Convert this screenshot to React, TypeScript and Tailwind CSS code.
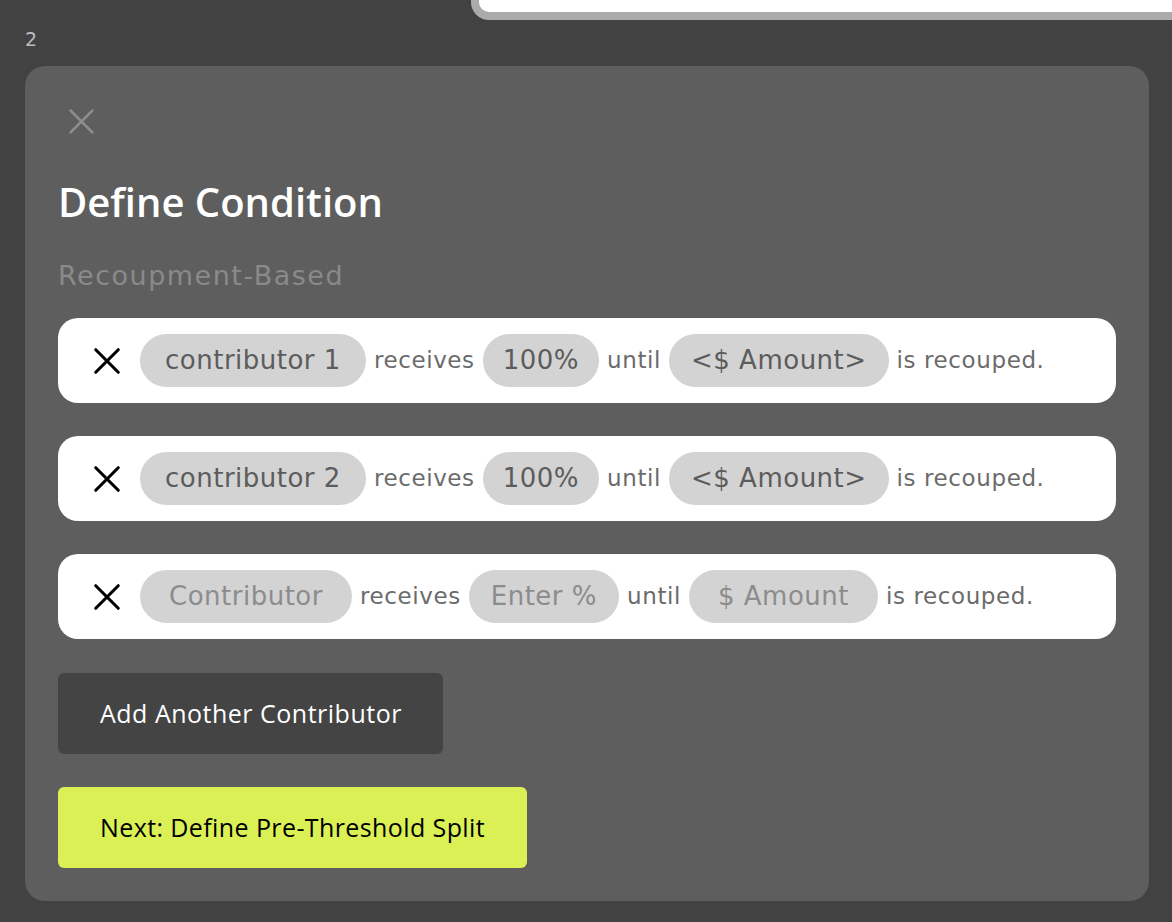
import React from 'react';

const body = { fontFamily: '"DejaVu Sans", "Liberation Sans", sans-serif' };
const open = { fontFamily: '"Open Sans", "Liberation Sans", sans-serif' };

type Part = { label: string; pad: string };

function CloseIcon({ className, width = 2.2 }: { className?: string; width?: number }) {
  return (
    <svg viewBox="0 0 24 24" className={className} fill="none" stroke="currentColor" strokeWidth={width} strokeLinecap="round">
      <path d="M3 3L21 21M21 3L3 21" />
    </svg>
  );
}

function Pill({ label, pad, placeholder }: Part & { placeholder?: boolean }) {
  return (
    <span
      className={`flex h-[53px] items-center rounded-full bg-[#d3d3d3] text-[26px] tracking-[0.5px] ${pad} ${
        placeholder ? 'text-[#8c8c8c]' : 'text-[#5c5c5c]'
      }`}
    >
      {label}
    </span>
  );
}

function Word({ children }: { children: React.ReactNode }) {
  return <span className="text-[23px] tracking-[0.6px] text-[#6b6b6b]">{children}</span>;
}

function ConditionRow({ who, pct, amount, placeholder }: { who: Part; pct: Part; amount: Part; placeholder?: boolean }) {
  return (
    <div className="flex h-[85px] items-center gap-[8px] rounded-[20px] bg-white pl-[34px]">
      <CloseIcon className="mr-[10px] h-[30px] w-[30px] text-black" width={2.5} />
      <Pill {...who} placeholder={placeholder} />
      <Word>receives</Word>
      <Pill {...pct} placeholder={placeholder} />
      <Word>until</Word>
      <Pill {...amount} placeholder={placeholder} />
      <Word>is recouped.</Word>
    </div>
  );
}

export default function App() {
  return (
    <div className="min-h-[922px] w-full overflow-hidden bg-[#424242]" style={body}>
      {/* card peeking from above */}
      <div className="ml-[471px] h-[20px] rounded-bl-[18px] border-b-[8px] border-l-[8px] border-[#ababab] bg-white" />

      <div className="px-[25px] pt-[8px]">
        <div className="text-[19px] leading-[22px] text-[#bdbdbd]">2</div>

        <div className="mt-[16px] h-[835px] w-[1124px] rounded-[20px] bg-[#5e5e5e] px-[33px] pt-[41px]">
          <CloseIcon className="ml-[9px] h-[29px] w-[29px] text-[#8e8e8e]" />

          <h1 className="mt-[44px] text-[40px] font-semibold leading-[44px] text-white" style={open}>
            Define Condition
          </h1>
          <p className="mt-[36px] text-[27px] leading-[32px] tracking-[1.5px] text-[#8a8a8a]">Recoupment-Based</p>

          <div className="mt-[26px] flex w-[1058px] flex-col gap-[33px]">
            <ConditionRow
              who={{ label: 'contributor 1', pad: 'px-[25px]' }}
              pct={{ label: '100%', pad: 'px-[20px]' }}
              amount={{ label: '<$ Amount>', pad: 'px-[22px]' }}
            />
            <ConditionRow
              who={{ label: 'contributor 2', pad: 'px-[25px]' }}
              pct={{ label: '100%', pad: 'px-[20px]' }}
              amount={{ label: '<$ Amount>', pad: 'px-[22px]' }}
            />
            <ConditionRow
              who={{ label: 'Contributor', pad: 'px-[29px]' }}
              pct={{ label: 'Enter %', pad: 'px-[22px]' }}
              amount={{ label: '$ Amount', pad: 'px-[29px]' }}
              placeholder
            />
          </div>

          <button
            className="mt-[34px] block h-[81px] w-[385px] rounded-[6px] bg-[#444444] pl-[42px] text-left text-[25px] font-medium tracking-[0.5px] text-white"
            style={open}
          >
            Add Another Contributor
          </button>

          <button
            className="mt-[33px] block h-[81px] w-[469px] rounded-[6px] bg-[#daf055] pl-[42px] text-left text-[25px] font-medium tracking-[0.4px] text-black"
            style={open}
          >
            Next: Define Pre-Threshold Split
          </button>
        </div>
      </div>
    </div>
  );
}
